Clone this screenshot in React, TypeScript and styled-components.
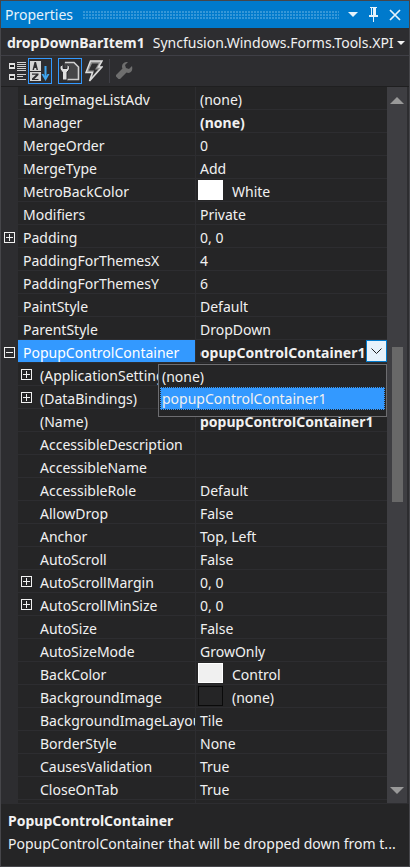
import React from "react";
import styled, { createGlobalStyle } from "styled-components";

const Global = createGlobalStyle`
  html, body { margin: 0; padding: 0; background: #2d2d30; }
  * { box-sizing: border-box; }
`;

const Page = styled.div`
  width: 410px;
  height: 867px;
  display: flex;
  flex-direction: column;
  background: #2d2d30;
  border: 1px solid #46464a;
  font-family: "Noto Sans", "Open Sans", sans-serif;
  font-size: 14px;
  color: #f1f1f1;
  overflow: hidden;
`;

const TitleBar = styled.div`
  height: 27px;
  flex: none;
  background: #007acc;
  display: flex;
  align-items: center;
  padding: 0 8px 0 4px;
  color: #e6f3fb;
  font-size: 14px;
`;

const Grip = styled.div`
  flex: 1;
  height: 8px;
  margin: 0 9px 0 10px;
  background-image: radial-gradient(circle at 1px 1px, #3597d8 1px, transparent 1px);
  background-size: 3px 3px;
`;

const TitleIcons = styled.div`
  display: flex;
  align-items: center;
  gap: 10px;
`;

const Selector = styled.div`
  height: 28px;
  flex: none;
  display: flex;
  align-items: center;
  padding: 2px 4px 0 6px;
  white-space: nowrap;
  border-bottom: 1px solid #3f3f46;
`;

const SelectorName = styled.b`
  font-weight: 700;
  font-size: 14px;
`;

const SelectorType = styled.span`
  flex: 1;
  overflow: hidden;
  font-size: 14px;
  margin-left: 8px;
`;

const Toolbar = styled.div`
  height: 31px;
  flex: none;
  display: flex;
  align-items: center;
  padding-left: 6px;
  border-bottom: 1px solid #1f1f20;
`;

const ToolButton = styled.div<{ $active?: boolean; $w?: number; $after?: number }>`
  width: ${(p) => p.$w ?? 22}px;
  height: 26px;
  display: flex;
  align-items: center;
  justify-content: center;
  border: 1px solid ${(p) => (p.$active ? "#3399ff" : "transparent")};
  margin-right: ${(p) => p.$after ?? 0}px;
`;

const ToolSep = styled.div`
  width: 1px;
  height: 24px;
  background: #3f3f46;
  margin: 0 4px 0 5px;
`;

const Body = styled.div`
  height: 716px;
  flex: none;
  display: flex;
`;

const GridArea = styled.div`
  position: relative;
  width: 386px;
  background: #252526;
  overflow: hidden;
`;

const Row = styled.div`
  height: 23px;
  display: grid;
  grid-template-columns: 17px 178px 1fr;
  border-bottom: 1px solid #2d2d30;
`;

const Gutter = styled.div`
  background: #2d2d30;
  margin-bottom: -1px;
  display: flex;
  align-items: center;
  padding: 2px 0 0 3px;
`;

const NameCell = styled.div<{ $nested?: boolean; $selected?: boolean }>`
  position: relative;
  display: flex;
  align-items: center;
  padding: 2px 0 0 ${(p) => (p.$nested ? 22 : 5)}px;
  white-space: nowrap;
  overflow: hidden;
  border-right: 1px solid #2d2d30;
  background: ${(p) => (p.$selected ? "#3399ff" : "transparent")};
  color: ${(p) => (p.$selected ? "#ffffff" : "#f1f1f1")};
`;

const NestedToggle = styled.span`
  position: absolute;
  left: 3px;
  top: 6px;
  display: flex;
`;

const ValueCell = styled.div<{ $bold?: boolean }>`
  position: relative;
  display: flex;
  align-items: center;
  padding: 2px 0 0 4px;
  white-space: nowrap;
  overflow: hidden;
  font-weight: ${(p) => (p.$bold ? 700 : 400)};
`;

const ClipBox = styled.span`
  width: 166px;
  flex: none;
  overflow: hidden;
`;

const ClippedValue = styled.span`
  display: inline-block;
  margin-left: -8px;
`;

const Swatch = styled.span<{ $fill: string; $edge: string }>`
  width: 25px;
  height: 20px;
  flex: none;
  margin: -2px 9px 0 -2px;
  background: ${(p) => p.$fill};
  border: 1px solid ${(p) => p.$edge};
`;

const DropButton = styled.div`
  position: absolute;
  right: 0;
  top: 0;
  width: 21px;
  height: 22px;
  background: #e6f2fb;
  border: 1px solid #007acc;
  display: flex;
  align-items: center;
  justify-content: center;
`;

const Popup = styled.div`
  position: absolute;
  left: 157px;
  top: 277px;
  width: 229px;
  height: 53px;
  background: #252526;
  border: 1px solid #6d6d70;
  padding: 0 1px;
`;

const PopupItem = styled.div<{ $selected?: boolean }>`
  height: ${(p) => (p.$selected ? 23 : 22)}px;
  display: flex;
  align-items: center;
  padding-left: 2px;
  background: ${(p) => (p.$selected ? "#3399ff" : "transparent")};
  color: #f1f1f1;
  outline: ${(p) => (p.$selected ? "1px dotted #2b2b2b" : "none")};
  outline-offset: -1px;
`;

const ScrollBar = styled.div`
  width: 20px;
  margin-right: 2px;
  background: #3e3e42;
  display: flex;
  flex-direction: column;
  align-items: center;
`;

const ArrowBox = styled.div`
  height: 26px;
  flex: none;
  width: 100%;
  display: flex;
  align-items: center;
  justify-content: center;
`;

const Track = styled.div`
  flex: 1;
  width: 100%;
  display: flex;
  justify-content: center;
  padding-top: 234px;
`;

const Thumb = styled.div`
  width: 11px;
  height: 155px;
  background: #686868;
`;

const Description = styled.div`
  flex: 1;
  background: #252526;
  margin-top: 1px;
  padding: 5px 7px 0;
  white-space: nowrap;
  overflow: hidden;
`;

const DescTitle = styled.div`
  font-weight: 700;
  line-height: 23px;
`;

const DescText = styled.div`
  line-height: 23px;
`;

const Box = ({ open }: { open?: boolean }) => (
  <svg width="11" height="11" viewBox="0 0 11 11" shapeRendering="crispEdges">
    <rect x="0.5" y="0.5" width="10" height="10" fill="none" stroke="#f1f1f1" />
    <rect x="2" y="5" width="7" height="1" fill="#f1f1f1" />
    {!open && <rect x="5" y="2" width="1" height="7" fill="#f1f1f1" />}
  </svg>
);

const Tri = ({ up, size = 14, color = "#999" }: { up?: boolean; size?: number; color?: string }) => (
  <svg width={size} height={size / 2} viewBox="0 0 14 7">
    <polygon points={up ? "7,0 14,7 0,7" : "0,0 14,0 7,7"} fill={color} />
  </svg>
);

const Pin = () => (
  <svg width="11" height="15" viewBox="0 0 11 15" shapeRendering="crispEdges">
    <path d="M2 0h7v1H8v7h2v2H6v5H5v-5H1V8h2V1H2z M4 1v7h1V1z" fill="#e6f3fb" fillRule="evenodd" />
  </svg>
);

const Close = () => (
  <svg width="12" height="12" viewBox="0 0 12 12">
    <path d="M1 1l10 10M11 1L1 11" stroke="#e6f3fb" strokeWidth="1.7" />
  </svg>
);

const Categorized = () => (
  <svg width="18" height="20" viewBox="0 0 18 20" shapeRendering="crispEdges">
    <rect x="0" y="2" width="6" height="6" fill="#e0e0e0" />
    <rect x="1" y="4" width="4" height="2" fill="#222" />
    <rect x="0" y="13" width="6" height="6" fill="#e0e0e0" />
    <rect x="1" y="15" width="4" height="2" fill="#222" />
    {[1, 3, 5, 7, 9].map((y) => (
      <rect key={y} x="8" y={y} width="9" height="1" fill="#cfcfcf" />
    ))}
    {[13, 15, 18].map((y) => (
      <rect key={y} x="8" y={y} width={y === 15 ? 6 : 9} height="1" fill="#cfcfcf" />
    ))}
  </svg>
);

const AZ = () => (
  <svg width="22" height="22" viewBox="0 0 22 22">
    <rect x="1" y="1" width="11" height="10" fill="#d4d4d4" />
    <path d="M3.500 10l2-8h1.500l2 8H7.500l-.4-2H5.400L5 10z" fill="#2d2d30" />
    <rect x="1" y="12" width="11" height="9" fill="#d4d4d4" />
    <path d="M3 13.500h6.500V15L5.500 19h4v1H3v-1.500L7 14.800H3z" fill="#2d2d30" />
    <rect x="15.500" y="6" width="2" height="12" fill="#3ea6f0" />
    <path d="M12.500 14h2l2 3 2-3h2l-4 7z" fill="#3ea6f0" />
  </svg>
);

const PropPage = () => (
  <svg width="22" height="22" viewBox="0 0 22 22">
    <path d="M5 2h10l5 5v13H7z" fill="#464648" />
    <path d="M6 2.500h9l4.500 4.500v12.500H8" fill="none" stroke="#d0d0d0" strokeWidth="1.600" />
    <path d="M1 6.500C.800 9 1.800 11 3.500 12v8h4.500v-8c1.800-1 2.700-3 2.500-5.500L8 4.500V8.500H4V4.500z" fill="#e0e0e0" stroke="#2d2d30" strokeWidth="1" />
  </svg>
);

const Bolt = () => (
  <svg width="18" height="22" viewBox="0 0 18 22">
    <path d="M5.500 1H17l-3.500 6H17L4.500 21 7.500 12.500H1z" fill="#8e8e8e" stroke="#dcdcdc" strokeWidth="1.500" />
    <path d="M7 3.500h6.500L10 9.500h3L7.500 16l1.500-5.500H3.800z" fill="#2f2f31" />
  </svg>
);

const Wrench = () => (
  <svg width="18" height="18" viewBox="0 0 18 18">
    <path d="M17 4l-3 3-3-1-1-3 3-3c-3-.5-6 1.500-6 4.500 0 1 .2 1.500.5 2L1 13v1.500L3.500 17H5l6.500-6.500c.5.300 1 .5 2 .5 3 0 4.500-3 3.500-7z" fill="#6e6e6e" />
  </svg>
);

type P = {
  n: string;
  v?: string;
  bold?: boolean;
  nested?: boolean;
  box?: "plus" | "minus";
  swatch?: [string, string];
  selected?: boolean;
};

const rows: P[] = [
  { n: "LargeImageListAdv", v: "(none)" },
  { n: "Manager", v: "(none)", bold: true },
  { n: "MergeOrder", v: "0" },
  { n: "MergeType", v: "Add" },
  { n: "MetroBackColor", v: "White", swatch: ["#ffffff", "#ffffff"] },
  { n: "Modifiers", v: "Private" },
  { n: "Padding", v: "0, 0", box: "plus" },
  { n: "PaddingForThemesX", v: "4" },
  { n: "PaddingForThemesY", v: "6" },
  { n: "PaintStyle", v: "Default" },
  { n: "ParentStyle", v: "DropDown" },
  { n: "PopupControlContainer", v: "popupControlContainer1", bold: true, box: "minus", selected: true },
  { n: "(ApplicationSettings)", nested: true, box: "plus" },
  { n: "(DataBindings)", nested: true, box: "plus" },
  { n: "(Name)", v: "popupControlContainer1", bold: true, nested: true },
  { n: "AccessibleDescription", nested: true },
  { n: "AccessibleName", nested: true },
  { n: "AccessibleRole", v: "Default", nested: true },
  { n: "AllowDrop", v: "False", nested: true },
  { n: "Anchor", v: "Top, Left", nested: true },
  { n: "AutoScroll", v: "False", nested: true },
  { n: "AutoScrollMargin", v: "0, 0", nested: true, box: "plus" },
  { n: "AutoScrollMinSize", v: "0, 0", nested: true, box: "plus" },
  { n: "AutoSize", v: "False", nested: true },
  { n: "AutoSizeMode", v: "GrowOnly", nested: true },
  { n: "BackColor", v: "Control", nested: true, swatch: ["#f0f0f0", "#ffffff"] },
  { n: "BackgroundImage", v: "(none)", nested: true, swatch: ["#252526", "#0a0a0a"] },
  { n: "BackgroundImageLayout", v: "Tile", nested: true },
  { n: "BorderStyle", v: "None", nested: true },
  { n: "CausesValidation", v: "True", nested: true },
  { n: "CloseOnTab", v: "True", nested: true },
  { n: "", nested: true },
];

const PropRow = ({ r }: { r: P }) => (
  <Row>
    <Gutter>{r.box && !r.nested && <Box open={r.box === "minus"} />}</Gutter>
    <NameCell $nested={r.nested} $selected={r.selected}>
      {r.box && r.nested && (
        <NestedToggle>
          <Box />
        </NestedToggle>
      )}
      {r.n}
    </NameCell>
    <ValueCell $bold={r.bold}>
      {r.swatch && <Swatch $fill={r.swatch[0]} $edge={r.swatch[1]} />}
      {r.selected ? (
        <ClipBox>
          <ClippedValue>{r.v}</ClippedValue>
        </ClipBox>
      ) : (
        r.v
      )}
      {r.selected && (
        <DropButton>
          <svg width="11" height="6" viewBox="0 0 11 6">
            <path d="M.5.500l5 5 5-5" fill="none" stroke="#1e1e1e" strokeWidth="1" />
          </svg>
        </DropButton>
      )}
    </ValueCell>
  </Row>
);

export default function App() {
  return (
    <Page>
      <Global />
      <TitleBar>
        Properties
        <Grip />
        <TitleIcons>
          <Tri size={10} color="#e6f3fb" />
          <Pin />
          <Close />
        </TitleIcons>
      </TitleBar>
      <Selector>
        <SelectorName>dropDownBarItem1</SelectorName>
        <SelectorType>Syncfusion.Windows.Forms.Tools.XPI</SelectorType>
        <Tri size={8} color="#f1f1f1" />
      </Selector>
      <Toolbar>
        <ToolButton $w={21}>
          <Categorized />
        </ToolButton>
        <ToolButton $active $w={24} $after={6}>
          <AZ />
        </ToolButton>
        <ToolButton $active $w={24} $after={2}>
          <PropPage />
        </ToolButton>
        <ToolButton $w={20}>
          <Bolt />
        </ToolButton>
        <ToolSep />
        <ToolButton $w={20}>
          <Wrench />
        </ToolButton>
      </Toolbar>
      <Body>
        <GridArea>
          {rows.map((r, i) => (
            <PropRow key={i} r={r} />
          ))}
          <Popup>
            <PopupItem>(none)</PopupItem>
            <PopupItem $selected>popupControlContainer1</PopupItem>
          </Popup>
        </GridArea>
        <ScrollBar>
          <ArrowBox>
            <Tri up />
          </ArrowBox>
          <Track>
            <Thumb />
          </Track>
          <ArrowBox>
            <Tri />
          </ArrowBox>
        </ScrollBar>
      </Body>
      <Description>
        <DescTitle>PopupControlContainer</DescTitle>
        <DescText>PopupControlContainer that will be dropped down from t...</DescText>
      </Description>
    </Page>
  );
}
